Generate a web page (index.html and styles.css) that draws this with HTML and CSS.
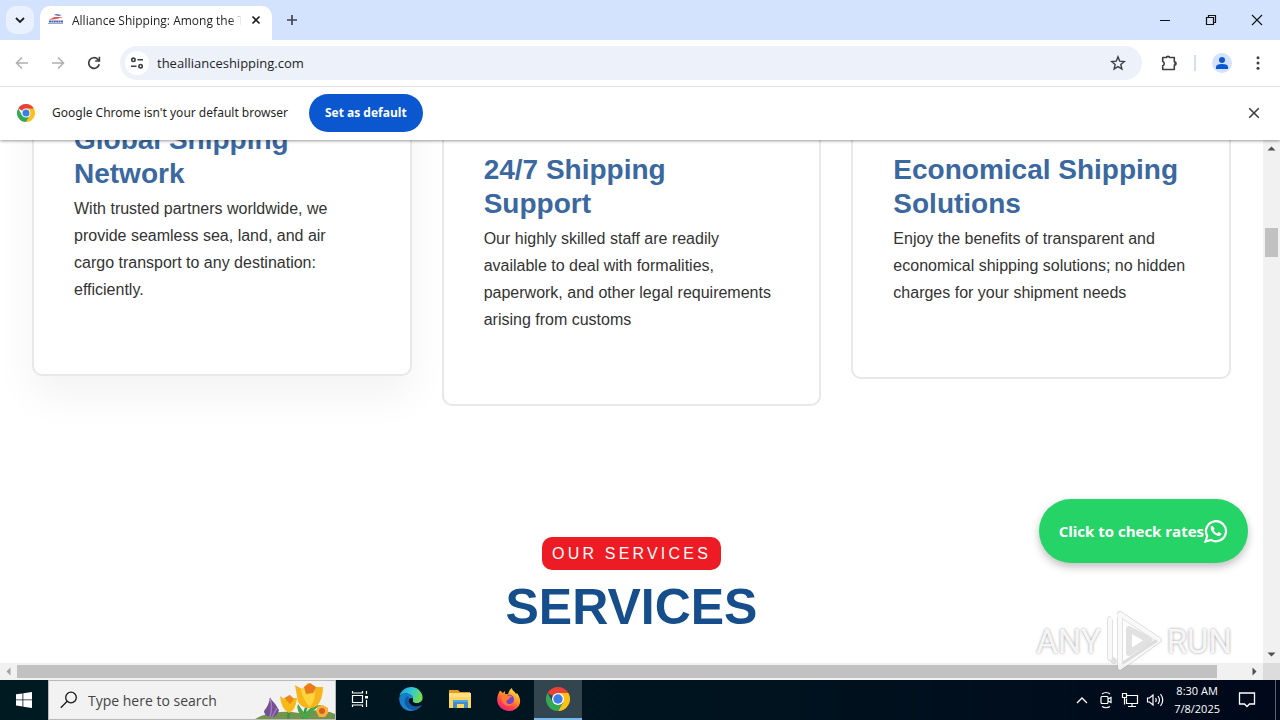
FILE: index.html
```html
<!DOCTYPE html>
<html lang="en">
<head>
<meta charset="utf-8">
<title>Alliance Shipping</title>
<link rel="stylesheet" href="styles.css">
</head>
<body>
<svg width="0" height="0" class="defs" aria-hidden="true">
  <symbol id="chrome" viewBox="0 0 24 24">
    <path fill="#ea4335" d="M12 12 1.6 6A12 12 0 0 1 22.4 6Z"/>
    <path fill="#fbc116" d="M12 6H22.4A12 12 0 0 1 12 24L17.2 15Z"/>
    <path fill="#34a853" d="M1.6 6A12 12 0 0 0 12 24L17.2 15 12 17 6.8 15Z"/>
    <circle cx="12" cy="12" r="6" fill="#fff"/>
    <circle cx="12" cy="12" r="4.7" fill="#3b7de9"/>
  </symbol>
</svg>

<header class="browser">
  <div class="tabstrip">
    <button class="tab-search" aria-label="Search tabs"><svg width="12" height="12" viewBox="0 0 12 12"><path d="M2 4 6 8 10 4" fill="none" stroke="#1f1f1f" stroke-width="1.8"/></svg></button>
    <div class="tab">
      <svg class="favicon" width="16" height="16" viewBox="0 0 16 16"><path d="M1 8 6 5 15 5 9 7Z" fill="#e25d61"/><path d="M6 3 8 2 14 3 11 4Z" fill="#5b6ea5"/><path d="M1 9.500H15" stroke="#4d639d" stroke-width="2" stroke-dasharray="2 .4"/><path d="M0 11.500H15" stroke="#8cabd8"/></svg>
      <span class="tab-title">Alliance Shipping: Among the Top</span>
      <button class="plain" aria-label="Close tab"><svg width="10" height="10" viewBox="0 0 10 10"><path d="m1.5 1.5 7 7m0-7-7 7" stroke="#1f1f1f" stroke-width="1.6"/></svg></button>
    </div>
    <button class="plain new-tab" aria-label="New tab"><svg width="12" height="12" viewBox="0 0 12 12"><path d="M6 1v10M1 6h10" stroke="#41464e" stroke-width="1.7"/></svg></button>
    <div class="window-controls">
      <button class="plain" aria-label="Minimize"><svg width="12" height="12" viewBox="0 0 12 12"><path d="M1 6.5h10" stroke="#111"/></svg></button>
      <button class="plain" aria-label="Restore"><svg width="12" height="12" viewBox="0 0 12 12"><path d="M1.5 3.5h7v7h-7zM3.5 3.5v-2h7v7h-2" fill="none" stroke="#111" stroke-width="1.2"/></svg></button>
      <button class="plain" aria-label="Close"><svg width="12" height="12" viewBox="0 0 12 12"><path d="m1 1 10 10M11 1 1 11" stroke="#111" stroke-width="1.1"/></svg></button>
    </div>
  </div>

  <div class="toolbar">
    <div class="nav">
      <button class="plain" aria-label="Back"><svg width="16" height="16" viewBox="0 0 16 16"><path d="M14 8H3M8 2.5 2.5 8 8 13.5" fill="none" stroke="#aeb0b3" stroke-width="1.6"/></svg></button>
      <button class="plain" aria-label="Forward"><svg width="16" height="16" viewBox="0 0 16 16"><path d="M2 8h11M8 2.5 13.5 8 8 13.5" fill="none" stroke="#aeb0b3" stroke-width="1.6"/></svg></button>
      <button class="plain" aria-label="Reload"><svg width="16" height="16" viewBox="0 0 16 16"><path d="M13.2 9.2A5.3 5.3 0 1 1 11.8 4.3L13.4 6" fill="none" stroke="#3c4043" stroke-width="1.7"/><path d="M14.2 1.8v5h-5V5.3h3.4V1.8Z" fill="#3c4043"/></svg></button>
    </div>
    <div class="omnibox">
      <button class="site-info" aria-label="Site information"><svg width="14" height="14" viewBox="0 0 14 14" fill="none" stroke="#3c4043" stroke-width="1.6"><circle cx="3.4" cy="3.8" r="1.7"/><path d="M7.5 3.8H13M1 10.2h5.5"/><circle cx="10.6" cy="10.2" r="1.7"/></svg></button>
      <input class="url" aria-label="Address" value="theallianceshipping.com">
      <button class="plain" aria-label="Bookmark"><svg width="16" height="16" viewBox="0 0 16 16"><path d="m8 1.8 1.7 4.3 4.6.4-3.5 3 1.1 4.5L8 11.6 4.1 14l1.1-4.5-3.5-3 4.6-.4Z" fill="none" stroke="#3c4043" stroke-width="1.4"/></svg></button>
    </div>
    <div class="actions">
      <button class="plain" aria-label="Extensions"><svg width="18" height="18" viewBox="0 0 18 18"><path d="M2.7 3.5h3.6a1.8 1.8 0 0 1 3.4 0h4.6v4.2a1.7 1.7 0 0 1 0 3.4v4.4H2.7v-3.7a2.2 2.2 0 0 0 0-4.2Z" fill="none" stroke="#3c4043" stroke-width="1.6" stroke-linejoin="round"/><path d="M6.3 3.5a1.8 1.8 0 0 1 3.4 0ZM14.3 7.7a1.7 1.7 0 0 1 0 3.4Z" fill="#3c4043"/></svg></button>
      <span class="divider"></span>
      <button class="plain" aria-label="Profile"><svg width="20" height="20" viewBox="0 0 20 20"><circle cx="10" cy="10" r="10" fill="#d3e3fd"/><circle cx="10" cy="7" r="3" fill="#0b57d0"/><path d="M4 16v-2q0-3 6-3t6 3v2Z" fill="#0b57d0"/></svg></button>
      <button class="plain" aria-label="Menu"><svg width="16" height="16" viewBox="0 0 16 16" fill="#3c4043"><circle cx="8" cy="2.8" r="1.5"/><circle cx="8" cy="8" r="1.5"/><circle cx="8" cy="13.2" r="1.5"/></svg></button>
    </div>
  </div>

  <div class="infobar">
    <svg width="18" height="18"><use href="#chrome"/></svg>
    <span class="info-text">Google Chrome isn't your default browser</span>
    <button class="set-default">Set as default</button>
    <button class="plain info-close" aria-label="Dismiss"><svg width="12" height="12" viewBox="0 0 12 12"><path d="m1.2 1.2 9.6 9.6m0-9.6-9.6 9.6" stroke="#3c4043" stroke-width="1.6"/></svg></button>
  </div>
</header>

<div class="viewport">
  <main class="page">
    <section class="cards">
      <article class="card raised">
        <h3>Global Shipping Network</h3>
        <p>With trusted partners worldwide, we provide seamless sea, land, and air cargo transport to any destination: efficiently.</p>
      </article>
      <article class="card">
        <h3>24/7 Shipping Support</h3>
        <p>Our highly skilled staff are readily available to deal with formalities, paperwork, and other legal requirements arising from customs</p>
      </article>
      <article class="card">
        <h3>Economical Shipping Solutions</h3>
        <p>Enjoy the benefits of transparent and economical shipping solutions; no hidden charges for your shipment needs</p>
      </article>
    </section>
    <section class="services">
      <span class="badge">OUR SERVICES</span>
      <h2>SERVICES</h2>
    </section>
  </main>
  <div class="scroll-y">
    <svg width="17" height="17" viewBox="0 0 17 17"><path d="m4.5 10.5 4-4 4 4Z" fill="#505050"/></svg>
    <div class="thumb-y"></div>
    <svg width="17" height="17" viewBox="0 0 17 17"><path d="m4.5 6.5 4 4 4-4Z" fill="#505050"/></svg>
  </div>
  <div class="scroll-x">
    <svg width="17" height="17" viewBox="0 0 17 17"><path d="m10.500 4.500-4 4 4 4Z" fill="#a3a3a3"/></svg>
    <div class="track-x"><div class="thumb-x"></div></div>
    <svg width="17" height="17" viewBox="0 0 17 17"><path d="m6.500 4.500 4 4-4 4Z" fill="#505050"/></svg>
  </div>
  <div class="corner"></div>
  <a class="rates" href="#">Click to check rates<svg width="24" height="24" viewBox="0 0 24 24"><path d="M1.500 22.500 3.200 17A10 10 0 1 1 7 20.900Z" fill="none" stroke="#fff" stroke-width="2.200"/><path d="M8.600 6.800c-.7-.4-2 .8-2 2.200 0 3.200 4.700 7.900 8.100 7.900 1.600 0 3-1.300 2.700-2.500l-2.700-1.300-1.500 1.500c-1.500-.5-3-2-3.700-3.500l1.100-1.400Z" fill="#fff"/></svg></a>
  <div class="watermark">
    <span>ANY</span>
    <svg width="58" height="64" viewBox="0 0 58 64" fill="none" stroke-linejoin="round" stroke-linecap="round"><path d="M15 5v54L54 31 15 5M5 10v39l4 3M24 20v24l20-13Z" stroke="#a8a8a8" stroke-opacity=".35" stroke-width="6"/><path d="M15 5v54L54 31ZM5 10v39M5 10l6-3" stroke="#fff" stroke-opacity=".8" stroke-width="4"/><path d="m18 54 33-22" stroke="#ddd" stroke-width="3"/></svg>
    <span>RUN</span>
  </div>
</div>

<footer class="taskbar">
  <button class="start" aria-label="Start"><svg width="16" height="16" viewBox="0 0 16 16" fill="#fff"><path d="M0 2.300 6.500 1.400V7.500H0ZM7.300 1.300 16 0V7.500H7.300ZM0 8.300H6.500V14.500L0 13.600ZM7.300 8.300H16V16L7.300 14.700Z"/></svg></button>
  <label class="search">
    <svg width="18" height="18" viewBox="0 0 18 18" fill="none" stroke="#1b1b1b" stroke-width="1.300"><circle cx="11" cy="6.500" r="5.300"/><path d="m7.200 10.300-6.400 6.500"/></svg>
    <input aria-label="Search" placeholder="Type here to search">
    <svg class="flowers" width="80" height="38" viewBox="0 0 80 38">
      <path d="M0 38Q18 28 44 32 64 26 80 33V38Z" fill="#71964b"/>
      <path d="M48 38Q50 27 54 22M33 38Q35 29 32 24" fill="none" stroke="#3f9344" stroke-width="2.500"/>
      <path d="M49 38Q40 29 43 23L50 33Q56 23 67 24 56 29 53 38Z" fill="#4da447"/>
      <path d="M40 4 47 8 53 2 60 6 68 6Q68 18 62 25 50 31 43 21Z" fill="#f6b51c"/>
      <path d="M46 9Q48 19 55 26 62 17 59 8L53 4Z" fill="#ffd43c"/>
      <path d="m49 6 6-4 6 4-3 6-7 1Z" fill="#e77a1a"/>
      <path d="M25 15 31 19 34 14 38 17 42 17Q41 29 34 32 26 28 25 15Z" fill="#f8b917"/>
      <path d="m29 17 6-3 4 4-4 5Z" fill="#ed861c"/>
      <path d="M15 17Q20 22 24 29 22 37 16 36 9 35 9 30 14 24 15 17Z" fill="#735095"/>
      <path d="M15 17Q18 26 15 36M22 27 17 36" fill="none" stroke="#a17bb8" stroke-width="1.500"/>
      <path d="M61 30 63 25 68 24 73 27 73 32 70 36 64 36Z" fill="#ffae38"/>
      <circle cx="67" cy="30" r="3" fill="#cf6221"/>
    </svg>
  </label>
  <nav class="apps">
    <button class="task-view" aria-label="Task view"><svg width="18" height="18" viewBox="0 0 18 18" fill="none" stroke="#fff" stroke-width="1.200"><path d="M1.500 5.500h10v7h-10ZM1.500 1v2h10V1M1.500 17v-2h10v2M15.500 1v3M15.500 10v7"/><path d="M14 6h3v2.500h-3Z" fill="#fff" stroke="none"/></svg></button>
    <button aria-label="Edge"><svg width="24" height="24" viewBox="0 0 24 24"><defs><linearGradient id="eg" x1="0" x2="1" y2=".3"><stop stop-color="#1a9bdc"/><stop offset=".55" stop-color="#31c8d6"/><stop offset="1" stop-color="#70dd55"/></linearGradient><linearGradient id="eb" y2="1"><stop stop-color="#127bc3"/><stop offset="1" stop-color="#1e8ddd"/></linearGradient></defs><path d="M.5 9C3 0 14-2.500 20 3c6 6 4 13-2 13-3 0-5-1-4-4 0-5-8-8-13.500-3Z" fill="url(#eg)"/><path d="M.2 12C0 8 4 6 8 6.500c4 .3 6 2.500 6 5-6-2-7 6 1 8 3 1 5 0 7.500-1.500C16 28 1 25 .2 12Z" fill="url(#eb)"/><path d="M8 9c-5 5-2 13 6 14 4 .2 7-2 8.500-5-7 4-15-1-12-7Z" fill="#1459a4"/><path d="M14 11.500c-3-1-5 3-1.500 6q4 3 9 .5-4 0-6.500-2c-2-1.500-1-3-1-4.500Z" fill="#00131f"/></svg></button>
    <button aria-label="File Explorer"><svg width="24" height="24" viewBox="0 0 24 24"><path d="M1 3h9l2 2h10v4H1Z" fill="#e49b20"/><path d="M1 6h22v15H1Z" fill="#ffd65d"/><path d="M1 6h22v4H1Z" fill="#ffe08a"/><path d="M5 13h15v8h-4v-4H9v4H5Z" fill="#3d8fce"/><path d="M5 13h15v2H5Z" fill="#55a7df"/></svg></button>
    <button aria-label="Firefox"><svg width="24" height="24" viewBox="0 0 24 24"><defs><linearGradient id="ff" x1=".8" x2=".2" y2="1"><stop stop-color="#ffe34c"/><stop offset=".4" stop-color="#ff9825"/><stop offset=".7" stop-color="#ff4052"/><stop offset="1" stop-color="#e51e87"/></linearGradient></defs><path d="M3 3.500 6 6 8 4v3h3c1-3 2-5 4-6 0 3 3 3 4 6l1-1c8 11-1 18-8 18C3 24-4 15 3 3.500Z" fill="url(#ff)"/><circle cx="12" cy="12.500" r="5" fill="#7643cf"/><path d="M5 8c3-2 5-1 6 1 2-1 4 0 4 1-3 0-3 3-5 3-2 4 3 5 6 3-2 5-10 3-11-2Z" fill="#ff7b2b"/></svg></button>
    <button class="active" aria-label="Chrome"><svg width="24" height="24"><use href="#chrome"/></svg></button>
  </nav>
  <div class="tray">
    <svg class="chevron" width="12" height="12" viewBox="0 0 12 12"><path d="m1 9 5-5 5 5" fill="none" stroke="#fff" stroke-width="1.300"/></svg>
    <svg width="16" height="18" viewBox="0 0 16 18" fill="none" stroke="#fff" stroke-width="1.200"><rect x="3" y="5.500" width="7" height="7" rx="1"/><path d="m10 8 3-1.500v5L10 10M4 3Q8 0 12 3M4 15.500q4 2.500 8 0"/></svg>
    <svg width="18" height="18" viewBox="0 0 18 18" fill="none" stroke="#fff" stroke-width="1.200"><path d="M6 4.500h10.500v8H5.500V7.500M1.500 2.500h4v4h-4ZM3.500 6.500v7M11 12.500v3M7 15.500h8"/></svg>
    <svg width="18" height="18" viewBox="0 0 18 18" fill="none" stroke="#fff" stroke-width="1.200"><path d="M1.500 7v4h2L7 14V4L3.500 7ZM9.500 7q1.500 2 0 4M12 5q3 4 0 8M14.500 3q4.500 6 0 12"/></svg>
    <time class="clock"><span>8:30 AM</span><span>7/8/2025</span></time>
    <svg width="18" height="18" viewBox="0 0 18 18"><path d="M1.500 2h15v11h-5L9 15.500 6.500 13h-5Z" fill="none" stroke="#fff" stroke-width="1.300"/></svg>
    <span class="peek"></span>
  </div>
</footer>
</body>
</html>
```
FILE: styles.css
```css
* { box-sizing: border-box; }
body {
  margin: 0;
  height: 100vh;
  display: flex;
  flex-direction: column;
  overflow: hidden;
  background: #fff;
  color: #1f1f1f;
  font-family: "Open Sans", "Noto Sans", sans-serif;
  font-size: 12px;
}
.defs { position: absolute; }
svg { display: block; flex: none; }
button { font: inherit; color: inherit; cursor: pointer; }
input { font: inherit; color: inherit; border: 0; outline: 0; background: none; padding: 0; min-width: 0; }
.plain {
  display: grid;
  place-items: center;
  border: 0;
  padding: 0;
  background: none;
}

/* Browser frame */
.browser { position: relative; z-index: 2; box-shadow: 0 1px 3px rgba(0, 0, 0, .4); background: #fff; }
.tabstrip { display: flex; height: 40px; padding-left: 6px; background: #d3e3fd; }
.tab-search {
  display: grid;
  place-items: center;
  width: 28px;
  height: 28px;
  margin: 6px 6px 0 0;
  padding: 0;
  border: 0;
  border-radius: 10px;
  background: #e9f1fe;
}
.tab {
  display: flex;
  align-items: center;
  width: 232px;
  height: 34px;
  margin-top: 6px;
  padding: 0 11px 6px 8px;
  border-radius: 10px 10px 0 0;
  background: #fff;
}
.tab-title {
  flex: 1;
  margin: 0 10px 0 8px;
  overflow: hidden;
  white-space: nowrap;
  mask-image: linear-gradient(90deg, #000 158px, transparent 170px);
}
.new-tab { width: 40px; }
.window-controls { display: flex; margin-left: auto; }
.window-controls .plain { width: 46px; }

.toolbar { display: flex; align-items: center; height: 47px; padding: 0 14px; border-bottom: 1px solid #dfe1e5; }
.nav { display: flex; gap: 20px; margin-right: 18px; }
.omnibox {
  display: flex;
  flex: 1;
  align-items: center;
  height: 34px;
  padding: 0 16px 0 5px;
  border-radius: 17px;
  background: #edf1fa;
}
.site-info {
  display: grid;
  place-items: center;
  width: 24px;
  height: 24px;
  margin-right: 8px;
  padding: 0;
  border: 0;
  border-radius: 50%;
  background: #fff;
}
.url { flex: 1; font-size: 13px; }
.actions { display: flex; align-items: center; margin-left: 18px; }
.divider { width: 2px; height: 16px; margin: 0 16px; background: #d3dff3; }
.actions .plain:last-child { margin-left: 18px; }

.infobar { display: flex; align-items: center; height: 53px; padding: 0 20px 2px 17px; }
.info-text { min-width: 241px; margin: 0 16px 0 17px; font-family: "Noto Sans", sans-serif; }
.set-default {
  min-width: 112px;
  height: 38px;
  padding: 0 16px;
  border: 0;
  border-radius: 19px;
  background: #0b57d0;
  color: #fff;
  font-weight: 700;
  white-space: nowrap;
}
.info-close { margin-left: auto; }

/* Web page */
.viewport {
  position: relative;
  display: grid;
  grid-template: minmax(0, 1fr) 17px / minmax(0, 1fr) 17px;
  flex: 1;
  min-height: 0;
}
.page { overflow: hidden; font-family: "Liberation Sans", Arial, sans-serif; }
.cards {
  display: grid;
  grid-template-columns: repeat(3, 1fr);
  align-items: start;
  gap: 30px;
  margin-top: -58px;
  padding: 0 32px;
}
.card { padding: 69px 40px 71px; border: 2px solid #e8e8e8; border-radius: 10px; background: #fff; }
.raised { margin-top: -30px; box-shadow: 0 20px 40px rgba(0, 0, 0, .05); }
.card h3 { margin: 0 0 4px; color: #3a689f; font-size: 28px; line-height: 34px; }
.card p { margin: 0; color: #333; font-size: 16px; line-height: 27px; }
.services { display: flex; flex-direction: column; align-items: center; margin-top: 131px; }
.badge {
  padding: 0 10px;
  border-radius: 10px;
  background: #ed1c24;
  color: #fff;
  font-size: 16px;
  letter-spacing: .2em;
  line-height: 33px;
}
.services h2 { margin: 7px 0 0; color: #164e8c; font-size: 50px; line-height: 60px; }

.scroll-y { display: flex; flex-direction: column; background: #f1f1f1; }
.thumb-y { height: 29px; margin: 71px 2px auto; background: #c1c1c1; }
.scroll-x { display: flex; background: #f1f1f1; }
.track-x { flex: 1; padding: 2px 29px 2px 0; }
.thumb-x { height: 13px; background: #c1c1c1; }
.corner { background: #dcdcdc; }

.rates {
  position: absolute;
  right: 32px;
  bottom: 117px;
  display: flex;
  align-items: center;
  height: 64px;
  padding: 0 20px;
  border-radius: 32px;
  background: #25d366;
  box-shadow: 0 4px 8px rgba(0, 0, 0, .25);
  color: #fff;
  font-size: 15px;
  font-weight: 700;
  text-decoration: none;
}
.watermark {
  position: absolute;
  right: 48px;
  bottom: 7px;
  display: flex;
  align-items: center;
  gap: 4px;
  color: rgba(255, 255, 255, .9);
  font-family: Roboto, "Liberation Sans", sans-serif;
  font-size: 33px;
  text-shadow: 0 0 3px rgba(0, 0, 0, .4);
  pointer-events: none;
}

/* Taskbar */
.taskbar { display: flex; height: 40px; background: linear-gradient(90deg, #001a22, #00131f 60%, #00081a); color: #fff; }
.start { display: grid; place-items: center; width: 48px; padding: 0; border: 0; background: none; }
.search {
  display: flex;
  align-items: center;
  width: 288px;
  padding-left: 11px;
  border: 1px solid #b9b9b9;
  background: #f2f2f2;
}
.search input { flex: 1; margin-left: 10px; font-size: 14px; }
.search input::placeholder { color: #444; opacity: 1; }
.apps { display: flex; gap: 1px; }
.apps button { display: grid; place-items: center; width: 48px; padding: 0; border: 0; border-bottom: 2px solid transparent; background: none; }
.apps .task-view { margin-right: 2px; }
.apps .active { border-bottom-color: #76b9ed; background: #33454e; }
.tray { display: flex; align-items: center; gap: 7px; margin-left: auto; }
.chevron { margin-right: 3px; }
.clock { display: flex; flex-direction: column; align-items: center; margin: 0 11px 0 3px; font-size: 11px; line-height: 18px; }
.peek { width: 1px; height: 40px; margin: 0 4px 0 12px; background: #5a6470; }
```
